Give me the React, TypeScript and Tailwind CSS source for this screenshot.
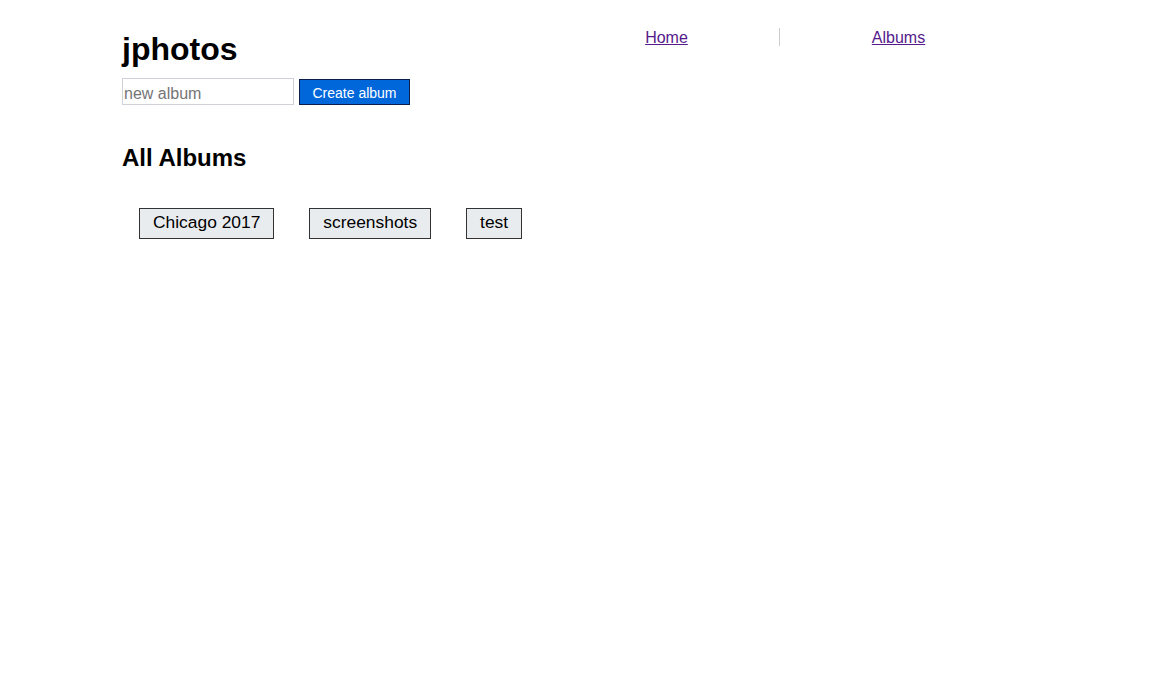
export default function App() {
  const albums = ["Chicago 2017", "screenshots", "test"];
  return (
    <div className="min-h-screen bg-white text-black font-['Liberation_Sans',Arial,sans-serif]">
      <div className="flex pl-[122px] pt-[28px]">
        <div className="w-[432px]">
          <h1 className="text-[32px] leading-[37px] font-bold relative top-[3px]">jphotos</h1>
          <div className="flex items-center gap-[5px] mt-[13px]">
            <input
              type="text"
              placeholder="new album"
              className="w-[172px] h-[27px] border border-[#cfd3d8] px-[1px] pt-[4px] text-[16px] placeholder:text-[#757575] outline-none"
            />
            <button className="h-[26px] w-[111px] bg-[#0067db] border border-[#0b1f4a] text-white text-[14px] pt-[3px]">
              Create album
            </button>
          </div>
        </div>
        <nav className="flex h-[18px]">
          <div className="w-[225px] text-center">
            <a href="#" className="text-[16px] leading-[18px] text-[#551a8b] underline relative -top-[2px]">
              Home
            </a>
          </div>
          <div className="w-[238px] text-center border-l border-[#ccc]">
            <a href="#" className="text-[16px] leading-[18px] text-[#551a8b] underline relative -top-[2px]">
              Albums
            </a>
          </div>
        </nav>
      </div>
      <div className="pl-[122px]">
        <h2 className="text-[24px] leading-[26px] font-bold mt-[40px]">All Albums</h2>
        <div className="flex gap-[35px] pl-[17px] mt-[37px]">
          {albums.map((a) => (
            <button
              key={a}
              className="h-[31px] px-[13px] pb-[4px] bg-[#e9ecef] border border-[#333] text-[17.4px] leading-[20px]"
            >
              {a}
            </button>
          ))}
        </div>
      </div>
    </div>
  );
}
